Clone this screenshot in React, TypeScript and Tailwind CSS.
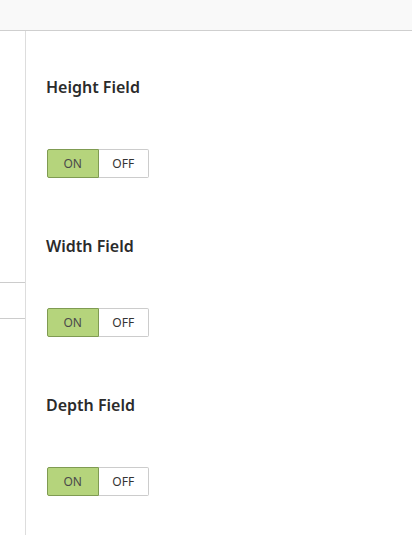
export default function App() {
  const fields = ["Height Field", "Width Field", "Depth Field"];

  return (
    <div className="flex h-[535px] w-[412px] flex-col overflow-hidden bg-white font-['Noto_Sans',sans-serif] text-[#333]">
      <div className="h-[31px] shrink-0 border-b border-[#cfcfcf] bg-[#f9f9f9]" />
      <div className="flex flex-1">
        <aside className="w-[26px] shrink-0 border-r border-[#ddd]">
          <div className="mt-[251px] h-[37px] border-y border-[#ccc]" />
        </aside>
        <main className="flex-1 pl-[21px] pt-[44px]">
          {fields.map((f) => (
            <section key={f} className="mb-[38px] h-[121px]">
              <h2 className="-ml-px h-[24px] text-[16px] leading-[24px] font-semibold text-[#2b2b2b]">{f}</h2>
              <div className="mt-[50px] flex h-[29px] w-[102px] text-[12px]">
                <button className="flex-1 rounded-l-[2px] border border-[#7f9b52] bg-[#b5d47c] text-[#4a4a4a]">
                  ON
                </button>
                <button className="flex-1 rounded-r-[2px] border border-l-0 border-[#ccc] bg-white text-[#333]">
                  OFF
                </button>
              </div>
            </section>
          ))}
        </main>
      </div>
    </div>
  );
}
